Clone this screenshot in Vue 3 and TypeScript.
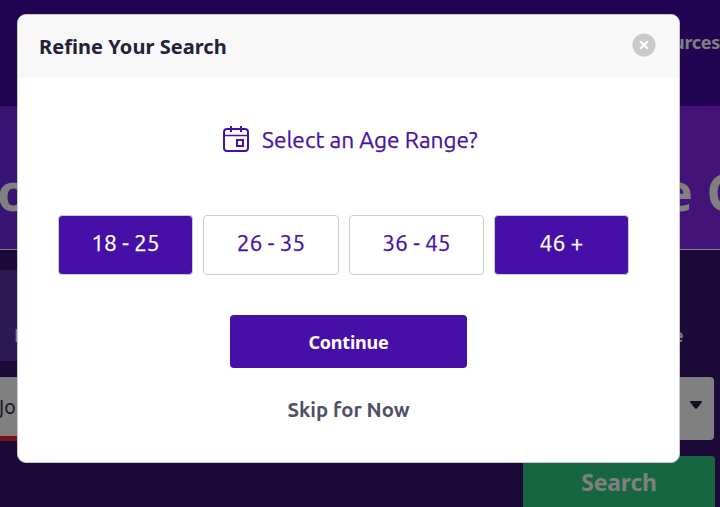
<script setup lang="ts">
import { ref } from 'vue'

interface AgeRange {
  label: string
  selected: boolean
}

const ranges = ref<AgeRange[]>([
  { label: '18 - 25', selected: true },
  { label: '26 - 35', selected: false },
  { label: '36 - 45', selected: false },
  { label: '46 +', selected: true },
])

const toggle = (range: AgeRange): void => {
  range.selected = !range.selected
}
</script>

<template>
  <div class="screen">
    <div class="page">
      <header class="topbar"><span class="nav">urces</span></header>
      <section class="hero">
        <span class="hero-left">o</span>
        <span class="hero-right">e C</span>
      </section>
      <section class="search">
        <div class="tabs">
          <div class="tab">N</div>
          <span class="tab-end">e</span>
        </div>
        <div class="fields">
          <div class="field field-error">Jo</div>
          <div class="field field-select">
            <svg width="14" height="10" viewBox="0 0 14 10"><path d="M2 1H12Q13.6 1 12.8 2.3L8.2 8.2Q7 9.4 5.8 8.2L1.2 2.3Q.4 1 2 1Z" fill="#10101f" /></svg>
          </div>
        </div>
        <div class="actions"><button class="search-btn">Search</button></div>
      </section>
    </div>

    <div class="modal" role="dialog" aria-labelledby="modal-title">
      <header class="modal-head">
        <h2 id="modal-title">Refine Your Search</h2>
        <button class="close" aria-label="Close">
          <svg width="24" height="24" viewBox="0 0 24 24">
            <circle cx="12" cy="12" r="11.5" fill="#cacaca" />
            <path d="M8.2 8.2L15.8 15.8M15.8 8.2L8.2 15.8" stroke="#fff" stroke-width="2.1" />
          </svg>
        </button>
      </header>
      <div class="modal-body">
        <div class="question">
          <svg class="calendar" width="26" height="26" viewBox="0 0 26 26" fill="none" stroke="#460fa8" stroke-width="2">
            <rect x="1" y="3" width="24" height="22" rx="3" />
            <path d="M1 9.5H25" stroke-width="1.5" />
            <path d="M8 0V6M18 0V6" />
            <rect x="14" y="14" width="6" height="6" />
          </svg>
          <span class="question-text">Select an Age Range?</span>
        </div>
        <div class="ranges">
          <button
            v-for="range in ranges"
            :key="range.label"
            class="range"
            :class="{ selected: range.selected }"
            @click="toggle(range)"
          >
            {{ range.label }}
          </button>
        </div>
        <button class="continue">Continue</button>
        <button class="skip">Skip for Now</button>
      </div>
    </div>
  </div>
</template>

<style>
body {
  margin: 0;
}
</style>

<style scoped>
.screen {
  position: relative;
  width: 720px;
  height: 507px;
  overflow: hidden;
  font-family: 'Noto Sans', sans-serif;
}
.screen * {
  box-sizing: border-box;
}
button {
  border: 0;
  padding: 0;
  font-family: inherit;
  cursor: pointer;
}
svg {
  display: block;
}
.page {
  height: 507px;
  background: #1b0937;
  color: #808080;
}
.topbar {
  display: flex;
  justify-content: flex-end;
  height: 106px;
  padding-top: 30px;
  background: #220552;
}
.nav {
  font-size: 18px;
  line-height: 24px;
  font-weight: 700;
  letter-spacing: -0.3px;
}
.hero {
  display: flex;
  justify-content: space-between;
  height: 144px;
  padding-top: 57px;
  border-bottom: 1px solid #808080;
  background: linear-gradient(90deg, #3a1472, #431377);
  font-size: 52px;
  line-height: 56px;
  font-weight: 700;
  white-space: nowrap;
  overflow: hidden;
}
.hero-left {
  margin-left: -3px;
}
.hero-right {
  width: 58px;
}
.search {
  padding-top: 20px;
}
.tabs {
  display: flex;
  justify-content: space-between;
  height: 91px;
  font-size: 18px;
  line-height: 24px;
  font-weight: 600;
}
.tab {
  width: 180px;
  padding: 53px 0 0 14px;
  background: #2d1954;
}
.tab-end {
  width: 47px;
  padding-top: 53px;
}
.fields {
  display: flex;
  justify-content: space-between;
  height: 63px;
  margin-top: 16px;
  padding-right: 6px;
}
.field {
  display: flex;
  align-items: center;
  background: #808080;
  color: #191326;
  font-size: 19px;
}
.field-error {
  width: 300px;
  height: 64px;
  border-bottom: 5px solid #751516;
  text-indent: -1px;
}
.field-select {
  width: 300px;
  justify-content: flex-end;
  padding: 0 11px 7px 0;
  border-radius: 4px;
}
.actions {
  display: flex;
  justify-content: flex-end;
  margin-top: 16px;
  padding-right: 5px;
}
.search-btn {
  width: 192px;
  height: 54px;
  padding-bottom: 2px;
  border-radius: 4px;
  background: #176642;
  color: #808080;
  font-size: 23px;
  line-height: 52px;
  font-weight: 700;
  letter-spacing: -0.2px;
}
.modal {
  position: absolute;
  left: 17px;
  top: 14px;
  width: 663px;
  height: 449px;
  border: 1px solid #cac7ce;
  border-radius: 9px;
  background: #fff;
  overflow: hidden;
}
.modal-head {
  display: flex;
  justify-content: space-between;
  height: 63px;
  padding: 18px 23px 0 21px;
  background: #f8f8f8;
}
.modal-head h2 {
  margin: 0;
  color: #242038;
  font-size: 20px;
  line-height: 28px;
  font-weight: 700;
  letter-spacing: 0.05px;
}
.close {
  width: 24px;
  height: 24px;
  background: none;
}
.modal-body {
  display: flex;
  flex-direction: column;
  align-items: center;
}
.question {
  display: flex;
  width: 251px;
  height: 30px;
  margin-top: 47px;
  gap: 13px;
  color: #460fa8;
}
.calendar {
  flex: none;
  margin-top: 1px;
}
.question-text {
  font-family: Ubuntu, 'Noto Sans', sans-serif;
  font-size: 22.7px;
  line-height: 30px;
  white-space: nowrap;
  -webkit-text-stroke: 0.25px currentColor;
}
.ranges {
  display: grid;
  grid-template-columns: 135px 136px 135px 135px;
  gap: 10px;
  align-self: flex-start;
  margin: 60px 0 0 40px;
}
.range {
  height: 60px;
  padding-bottom: 5px;
  border: 1px solid #ccc;
  border-radius: 4px;
  background: #fff;
  color: #460fa8;
  font-family: Ubuntu, 'Noto Sans', sans-serif;
  font-size: 22.8px;
  -webkit-text-stroke: 0.25px currentColor;
}
.range.selected {
  background: #460fa8;
  color: #fff;
}
.continue {
  width: 237px;
  height: 53px;
  margin-top: 40px;
  border-radius: 4px;
  background: #460fa8;
  color: #fff;
  font-size: 18px;
  font-weight: 700;
  letter-spacing: -0.25px;
}
.skip {
  height: 30px;
  margin-top: 27px;
  background: none;
  color: #4f5068;
  font-family: Ubuntu, 'Noto Sans', sans-serif;
  font-size: 20.3px;
  line-height: 30px;
  font-weight: 700;
}
</style>
